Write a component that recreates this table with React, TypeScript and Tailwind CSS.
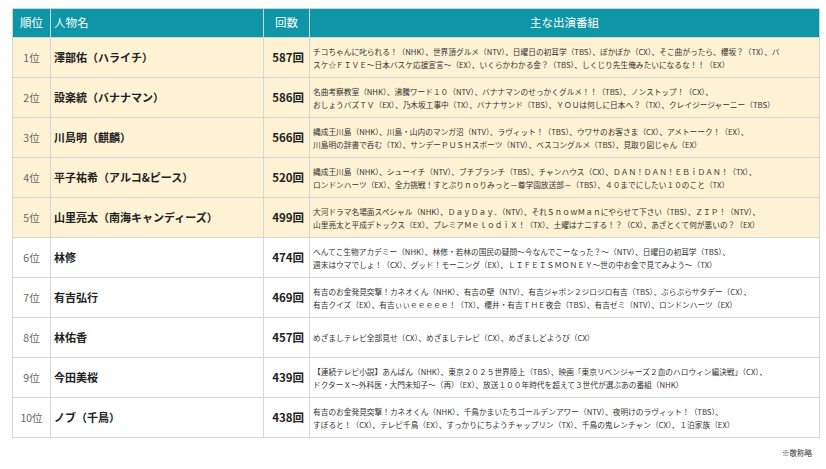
const rows = [
  {
    rank: "1位",
    name: "澤部佑（ハライチ）",
    count: "587",
    lines: [
      "チコちゃんに叱られる！（NHK）、世界頂グルメ（NTV）、日曜日の初耳学（TBS）、ぽかぽか（CX）、そこ曲がったら、櫻坂？（TX）、バ",
      "スケ☆ＦＩＶＥ～日本バスケ応援宣言～（EX）、いくらかわかる金？（TBS）、しくじり先生俺みたいになるな！！（EX）",
    ],
  },
  {
    rank: "2位",
    name: "設楽統（バナナマン）",
    count: "586",
    lines: [
      "名曲考察教室（NHK）、沸騰ワード１０（NTV）、バナナマンのせっかくグルメ！！（TBS）、ノンストップ！（CX）、",
      "おしょうバズＴＶ（EX）、乃木坂工事中（TX）、バナナサンド（TBS）、ＹＯＵは何しに日本へ？（TX）、クレイジージャーニー（TBS）",
    ],
  },
  {
    rank: "3位",
    name: "川島明（麒麟）",
    count: "566",
    lines: [
      "縄成王川島（NHK）、川島・山内のマンガ沼（NTV）、ラヴィット！（TBS）、ウワサのお客さま（CX）、アメトーーク！（EX）、",
      "川島明の辞書で呑む（TX）、サンデーＰＵＳＨスポーツ（NTV）、ベスコングルメ（TBS）、見取り図じゃん（EX）",
    ],
  },
  {
    rank: "4位",
    name: "平子祐希（アルコ&ピース）",
    count: "520",
    lines: [
      "縄成王川島（NHK）、シューイチ（NTV）、ブチブランチ（TBS）、チャンハウス（CX）、ＤＡＮ！ＤＡＮ！ＥＢｉＤＡＮ！（TX）、",
      "ロンドンハーツ（EX）、全力挑戦！すとぷりｎｏりみっと－尊学園放送部－（TBS）、４０までにしたい１０のこと（TX）",
    ],
  },
  {
    rank: "5位",
    name: "山里亮太（南海キャンディーズ）",
    count: "499",
    lines: [
      "大河ドラマ名場面スペシャル（NHK）、ＤａｙＤａｙ．（NTV）、それＳｎｏｗＭａｎにやらせて下さい（TBS）、ＺＩＰ！（NTV）、",
      "山里亮太と平成デトックス（EX）、プレミアＭｅｌｏｄｉＸ！（TX）、土曜はナニする！？（CX）、あざとくて何が悪いの？（EX）",
    ],
  },
  {
    rank: "6位",
    name: "林修",
    count: "474",
    lines: [
      "へんてこ生物アカデミー（NHK）、林修・若林の国民の疑問～今なんでこーなった？～（NTV）、日曜日の初耳学（TBS）、",
      "週末はウマでしょ！（CX）、グッド！モーニング（EX）、ＬＩＦＥＩＳＭＯＮＥＹ～世の中お金で見てみよう～（TX）",
    ],
  },
  {
    rank: "7位",
    name: "有吉弘行",
    count: "469",
    lines: [
      "有吉のお金発見突撃！カネオくん（NHK）、有吉の壁（NTV）、有吉ジャポン２ジロジロ有吉（TBS）、ぶらぶらサタデー（CX）、",
      "有吉クイズ（EX）、有吉ぃぃｅｅｅｅｅ！（TX）、櫻井・有吉ＴＨＥ夜会（TBS）、有吉ゼミ（NTV）、ロンドンハーツ（EX）",
    ],
  },
  {
    rank: "8位",
    name: "林佑香",
    count: "457",
    lines: ["めざましテレビ全部見せ（CX）、めざましテレビ（CX）、めざましどようび（CX）"],
  },
  {
    rank: "9位",
    name: "今田美桜",
    count: "439",
    lines: [
      "【連続テレビ小説】あんぱん（NHK）、東京２０２５世界陸上（TBS）、映画「東京リベンジャーズ２血のハロウィン編決戦」（CX）、",
      "ドクターＸ～外科医・大門未知子～（再）（EX）、放送１００年時代を超えて３世代が選ぶあの番組（NHK）",
    ],
  },
  {
    rank: "10位",
    name: "ノブ（千鳥）",
    count: "438",
    lines: [
      "有吉のお金発見突撃！カネオくん（NHK）、千鳥かまいたちゴールデンアワー（NTV）、夜明けのラヴィット！（TBS）、",
      "すぽると！（CX）、テレビ千鳥（EX）、すっかりにちようチャップリン（TX）、千鳥の鬼レンチャン（CX）、１泊家族（EX）",
    ],
  },
]

export default function App() {
  return (
    <div
      className="w-[826px] h-[469px] bg-white pt-2 px-3 text-[#222]"
      style={{ fontFamily: '"Noto Sans CJK JP", "Noto Sans", sans-serif' }}
    >
      <table className="w-[808px] border-collapse table-fixed">
        <colgroup>
          <col className="w-[38px]" />
          <col className="w-[213px]" />
          <col className="w-[46px]" />
          <col />
        </colgroup>
        <thead>
          <tr className="h-[29px] bg-[#0f96a6] text-white text-[11.5px]">
            <th className="border border-[#c9d6d8] font-normal text-center">順位</th>
            <th className="border border-[#c9d6d8] font-normal text-left pl-[3px]">人物名</th>
            <th className="border border-[#c9d6d8] font-normal text-center">回数</th>
            <th className="border border-[#c9d6d8] font-normal text-center">主な出演番組</th>
          </tr>
        </thead>
        <tbody>
          {rows.map((r, i) => (
            <tr key={r.rank} className={i < 5 ? "h-10 bg-[#fdf2d4]" : "h-10 bg-white"}>
              <td className="border border-[#d6d6d6] text-center text-[10.5px] text-[#666]">{r.rank}</td>
              <td className="border border-[#d6d6d6] pl-[3px] text-[11px] font-bold">{r.name}</td>
              <td className="border border-[#d6d6d6] pr-[5px] text-right text-[11.5px] font-bold">
                {r.count}回
              </td>
              <td className="border border-[#d6d6d6] pl-[3px] text-[7.7px] leading-[13px] text-[#333]">
                {r.lines.map((l, j) => (
                  <div key={j} className="whitespace-nowrap">
                    {l}
                  </div>
                ))}
              </td>
            </tr>
          ))}
        </tbody>
      </table>
      <div className="mt-[9px] text-right pr-[2px] text-[7.5px] text-[#333]">※敬称略</div>
    </div>
  )
}
